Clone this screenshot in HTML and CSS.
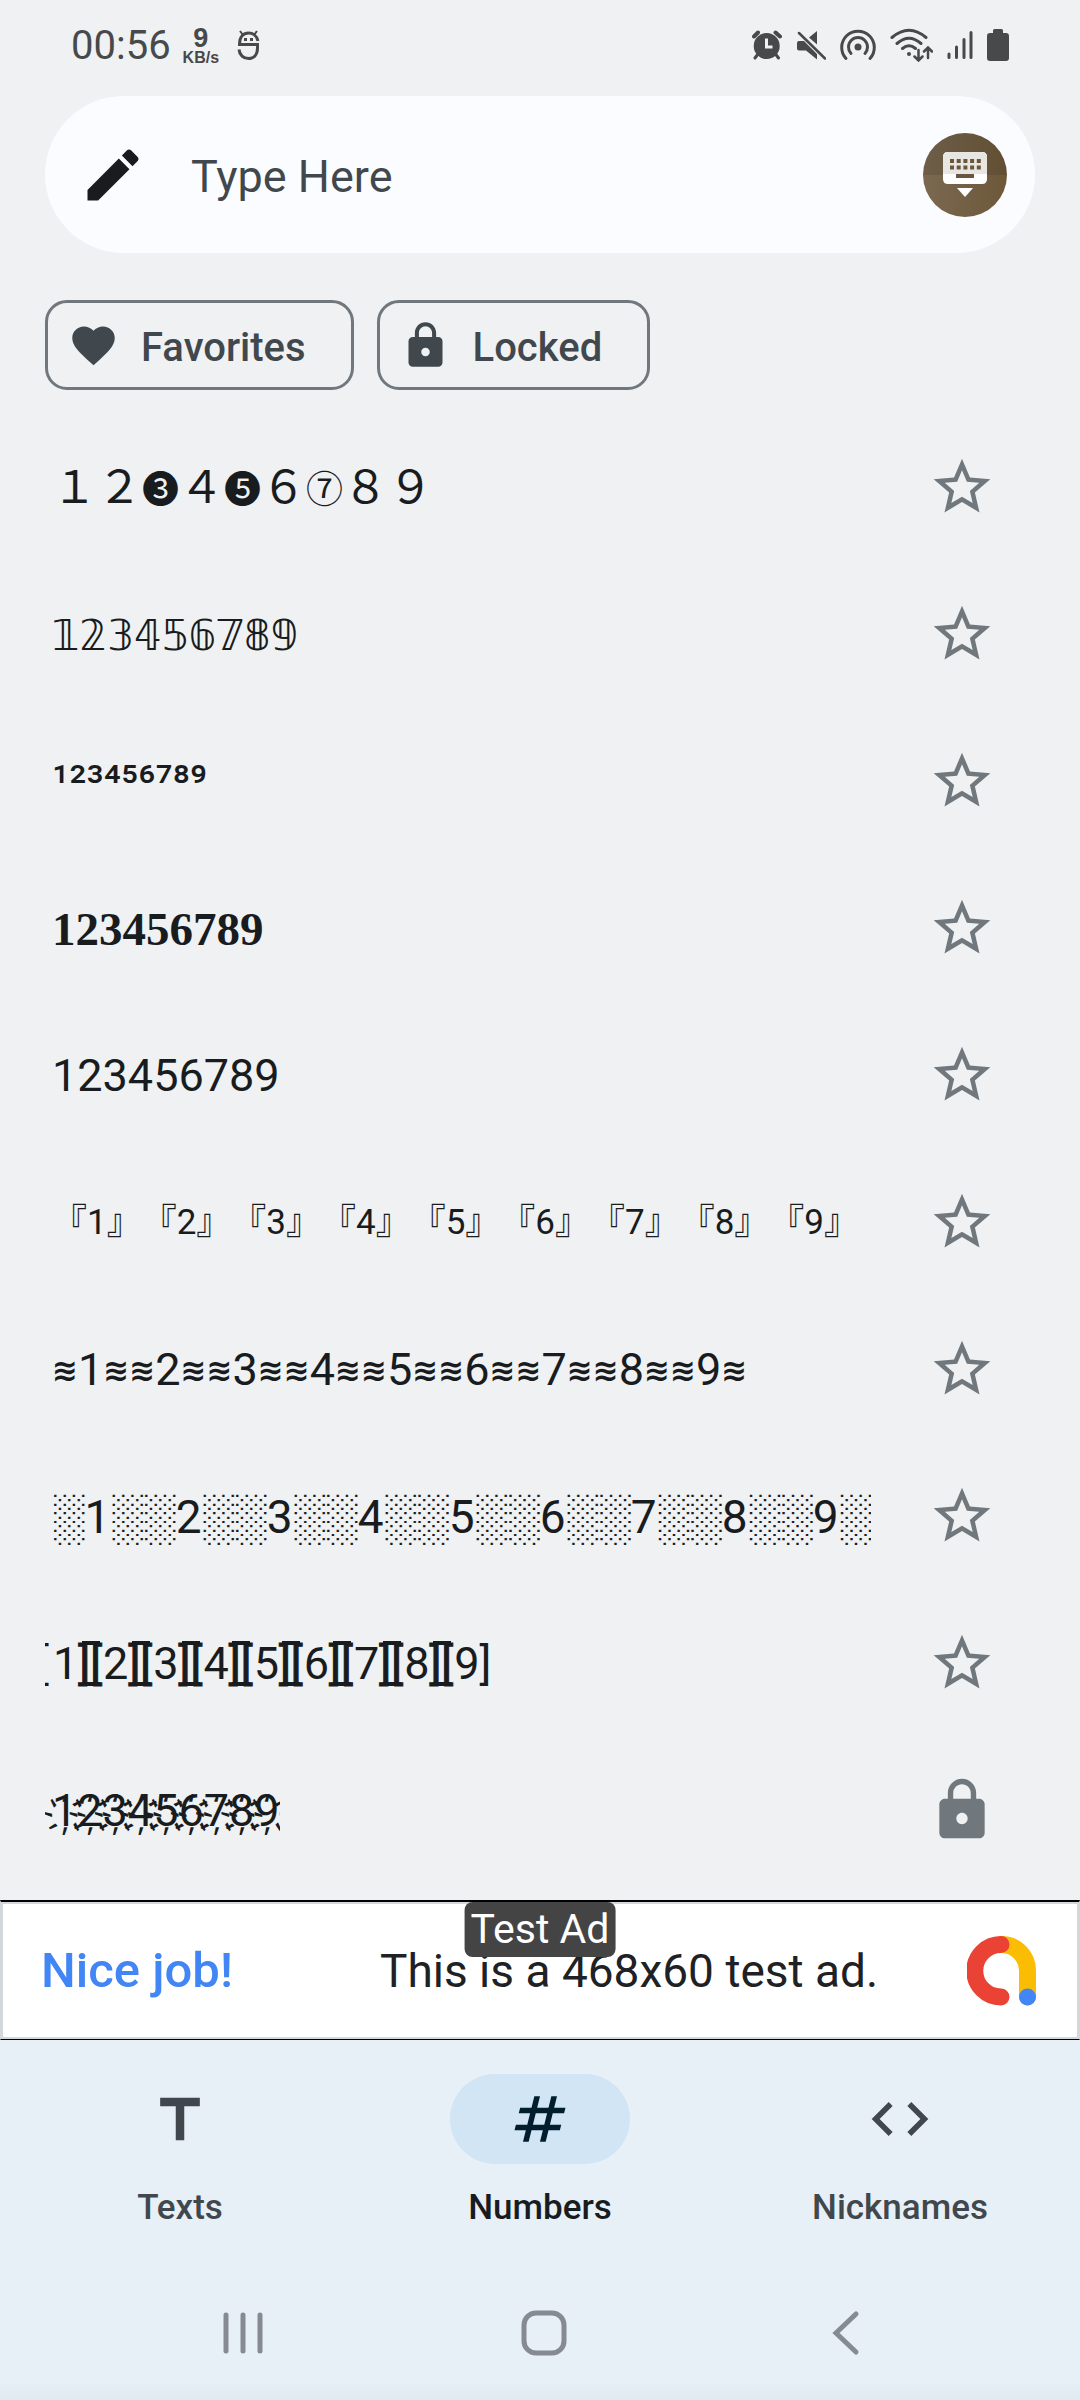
FILE: index.html
```
<!DOCTYPE html>
<html lang="en">
<head>
    <meta charset="UTF-8">
    <meta name="viewport" content="width=device-width, initial-scale=1">
    <title>Numbers</title>
    <link rel="stylesheet" href="styles.css">
</head>
<body>

<svg class="defs" aria-hidden="true">
    <symbol id="star" viewBox="0 0 24 24">
        <path d="M22 9.24l-7.19-.62L12 2 9.19 8.63 2 9.24l5.46 4.73L5.82 21 12 17.27 18.18 21l-1.63-7.03L22 9.24zM12 15.4l-3.76 2.27 1-4.28-3.32-2.88 4.38-.38L12 6.1l1.71 4.04 4.38.38-3.32 2.88 1 4.28L12 15.4z"/>
    </symbol>
    <symbol id="lock" viewBox="0 0 24 24">
        <path d="M18 8h-1V6c0-2.76-2.24-5-5-5S7 3.24 7 6v2H6c-1.1 0-2 .9-2 2v10c0 1.1.9 2 2 2h12c1.1 0 2-.9 2-2V10c0-1.1-.9-2-2-2zm-6 9c-1.1 0-2-.9-2-2s.9-2 2-2 2 .9 2 2-.9 2-2 2zm3.1-9H8.9V6c0-1.71 1.39-3.1 3.1-3.1s3.1 1.39 3.1 3.1v2z"/>
    </symbol>
</svg>

<header class="status">
    <time>00:56</time>
    <div class="speed"><b>9</b><small>KB/s</small></div>
    <svg class="app" viewBox="0 0 23 31" width="23" height="31" fill="none" stroke="#47494a" stroke-width="3">
        <path d="M21 11C20 6 16 3 11.500 3S2.500 6 2.500 14.500H20.500V18c0 7-4 10.500-9 10.500S2.500 25 2 19.500"/>
        <path d="M3 1l3 4M20 1l-3 4" stroke-width="2"/>
        <path d="M7 9.500h3M13 9.500h3"/>
    </svg>
    <div class="indicators">
        <svg viewBox="0 0 30 30" width="30" height="30">
            <circle cx="14.700" cy="16" r="13"/>
            <path d="M2 6.500L6 2.500M23.500 2.500L28 6.500" stroke="#47494a" stroke-width="4" stroke-linecap="round"/>
            <path d="M6 24l-3 4M23.500 24l3 4" stroke="#47494a" stroke-width="3" stroke-linecap="round"/>
            <path d="M14.500 8.500v8.500h6" fill="none" stroke="#eff1f3" stroke-width="3"/>
        </svg>
        <svg viewBox="0 0 30 30" width="30" height="30">
            <path d="M1 13q0-2 2-2h5L21 24v5.500L10 20.500H3q-2 0-2-2zM13 7.500L21 1v13.500z"/>
            <path d="M3 3L29 28.500" stroke="#47494a" stroke-width="2.500" stroke-linecap="round"/>
        </svg>
        <svg viewBox="0 0 36 34" width="36" height="34" fill="none" stroke="#47494a" stroke-width="3" stroke-linecap="round">
            <path d="M6 30.500A16.300 16.300 0 1 1 30 30.500M11 25.500A9.500 9.500 0 1 1 25 25.500"/>
            <circle cx="18" cy="19" r="3.500" fill="#47494a" stroke="none"/>
        </svg>
        <svg viewBox="0 0 43 34" width="43" height="34" fill="none" stroke="#47494a" stroke-width="3" stroke-linecap="round">
            <path d="M2 9.500Q19 -5 36 9.500M7 15.500Q19 5 31 15.500M12.500 20.500Q19 15 25.500 20.500"/>
            <circle cx="19" cy="26" r="2" fill="#47494a" stroke="none"/>
            <path d="M28.500 22v10M24.500 28.500l4 4 4-4M38 30V20M34 23.500l4-4 4 4" stroke-width="2.500"/>
        </svg>
        <svg viewBox="0 0 26 30" width="26" height="30" stroke="#47494a" stroke-width="3" stroke-linecap="round">
            <path d="M2 24v3.500M9.500 17v10.500M17 9.500v18M24 2.500v25"/>
        </svg>
        <svg viewBox="0 0 22 32" width="22" height="32">
            <path d="M6 1.500Q6 0 7.500 0h7Q16 0 16 1.500V4h3q3 0 3 3v22q0 3-3 3H3q-3 0-3-3V7q0-3 3-3h3z"/>
        </svg>
    </div>
</header>

<form class="search">
    <label for="text" aria-label="Type Here">
        <svg viewBox="0 0 24 24" width="68" height="68" fill="#191c1e">
            <path d="M3 17.250V21h3.750L17.810 9.940l-3.750-3.750L3 17.250zM20.710 7.040c.39-.39.39-1.020 0-1.410l-2.340-2.340c-.39-.39-1.020-.39-1.410 0l-1.830 1.830 3.750 3.750 1.830-1.830z"/>
        </svg>
    </label>
    <input id="text" type="text" placeholder="Type Here">
    <button type="button" class="keyboard" aria-label="Keyboard">
        <svg viewBox="0 0 44 46" width="44" height="46">
            <path d="M5 0h34q5 0 5 5v22q0 5-5 5H5q-5 0-5-5V5q0-5 5-5z" fill="#fff"/>
            <path d="M5 0h34q5 0 5 5v17H0V5q0-5 5-5z" fill="#e8e6e3"/>
            <path d="M7 9h31M7 15.500h31" stroke="#69563c" stroke-width="4" stroke-dasharray="4 2.700"/>
            <path d="M13 24h18" stroke="#69563c" stroke-width="4"/>
            <path d="M14 36h16l-8 9z" fill="#fff"/>
        </svg>
    </button>
</form>

<div class="chips">
    <button>
        <svg viewBox="0 0 24 24" width="51" height="51">
            <path d="M12 21.350l-1.450-1.320C5.400 15.360 2 12.280 2 8.500 2 5.420 4.420 3 7.500 3c1.740 0 3.410.81 4.500 2.090C13.090 3.810 14.760 3 16.500 3 19.580 3 22 5.420 22 8.500c0 3.780-3.400 6.860-8.550 11.540L12 21.350z"/>
        </svg>
        <span>Favorites</span>
    </button>
    <button>
        <svg width="51" height="51"><use href="#lock"/></svg>
        <span>Locked</span>
    </button>
</div>

<ul class="styles">
    <li>
        <span class="sample">１２<span class="circled">❸</span>４<span class="circled">❺</span>６<span class="circled">⑦</span>８９</span>
        <button aria-label="Add to favorites"><svg><use href="#star"/></svg></button>
    </li>
    <li>
        <span class="sample double">𝟙𝟚𝟛𝟜𝟝𝟞𝟟𝟠𝟡</span>
        <button aria-label="Add to favorites"><svg><use href="#star"/></svg></button>
    </li>
    <li>
        <span class="sample small">¹²³⁴⁵⁶⁷⁸⁹</span>
        <button aria-label="Add to favorites"><svg><use href="#star"/></svg></button>
    </li>
    <li>
        <span class="sample serif">123456789</span>
        <button aria-label="Add to favorites"><svg><use href="#star"/></svg></button>
    </li>
    <li>
        <span class="sample">123456789</span>
        <button aria-label="Add to favorites"><svg><use href="#star"/></svg></button>
    </li>
    <li>
        <span class="sample corner">『1』『2』『3』『4』『5』『6』『7』『8』『9』</span>
        <button aria-label="Add to favorites"><svg><use href="#star"/></svg></button>
    </li>
    <li>
        <span class="sample waves"><i>≋</i>1<i>≋≋</i>2<i>≋≋</i>3<i>≋≋</i>4<i>≋≋</i>5<i>≋≋</i>6<i>≋≋</i>7<i>≋≋</i>8<i>≋≋</i>9<i>≋</i></span>
        <button aria-label="Add to favorites"><svg><use href="#star"/></svg></button>
    </li>
    <li>
        <span class="sample shade">░1░░2░░3░░4░░5░░6░░7░░8░░9░</span>
        <button aria-label="Add to favorites"><svg><use href="#star"/></svg></button>
    </li>
    <li>
        <span class="sample brackets"><i>[</i>1<b>][</b>2<b>][</b>3<b>][</b>4<b>][</b>5<b>][</b>6<b>][</b>7<b>][</b>8<b>][</b>9]</span>
        <button aria-label="Add to favorites"><svg><use href="#star"/></svg></button>
    </li>
    <li>
        <span class="sample">1҉2҉3҉4҉5҉6҉7҉8҉9҉</span>
        <button aria-label="Unlock"><svg><use href="#lock"/></svg></button>
    </li>
</ul>

<aside class="ad">
    <span class="badge">Test Ad</span>
    <strong>Nice job!</strong>
    <p>This is a 468x60 test ad.</p>
    <svg viewBox="0 0 70 70" width="70" height="70" fill="none" stroke-width="17" stroke-linecap="round">
        <path d="M34.500 8.500A26 26 0 0 1 60.500 34.500V61" stroke="#fbbc04"/>
        <path d="M34 8.500A26 26 0 0 0 34 61" stroke="#ea4335"/>
        <circle cx="60.500" cy="61" r="8.500" fill="#4285f4"/>
    </svg>
</aside>

<nav class="tabs">
    <a href="#texts">
        <span class="pill"><svg viewBox="0 0 24 24" width="68" height="68"><path d="M5 4.500v3h5.500v12h3v-12H19v-3z"/></svg></span>
        Texts
    </a>
    <a href="#numbers" class="active">
        <span class="pill"><svg viewBox="0 0 24 24" width="68" height="68"><path d="M20.500 10l.5-2h-4l1-4h-2l-1 4h-4l1-4h-2L9 8H5l-.5 2h4l-1 4h-4L3 16h4l-1 4h2l1-4h4l-1 4h2l1-4h4l.5-2h-4l1-4h4zm-7 4h-4l1-4h4l-1 4z"/></svg></span>
        Numbers
    </a>
    <a href="#nicknames">
        <span class="pill"><svg viewBox="0 0 24 24" width="68" height="68"><path d="M9.400 16.600L4.800 12l4.600-4.600L8 6l-6 6 6 6 1.400-1.400zm5.200 0l4.600-4.600-4.600-4.600L16 6l6 6-6 6-1.400-1.400z"/></svg></span>
        Nicknames
    </a>
</nav>

<footer class="system">
    <button aria-label="Recent apps"><svg viewBox="0 0 46 46" width="46" height="46"><path d="M6 5v36M23 5v36M40 5v36"/></svg></button>
    <button aria-label="Home"><svg viewBox="0 0 46 46" width="46" height="46"><rect x="3" y="3" width="40" height="40" rx="12"/></svg></button>
    <button aria-label="Back"><svg viewBox="0 0 46 46" width="46" height="46"><path d="M34 4L14 23l20 19"/></svg></button>
</footer>

</body>
</html>
```
FILE: styles.css
```
* {
    box-sizing: border-box;
}

body {
    display: flex;
    flex-direction: column;
    min-height: 100vh;
    margin: 0;
    background-color: #eff1f3;
    color: #191c1e;
    font-family: Roboto, "Noto Sans CJK JP", sans-serif;
    font-size: 45px;
}

button {
    padding: 0;
    border: 0;
    background: none;
    font: inherit;
    cursor: pointer;
}

svg {
    display: block;
    flex: none;
}

.defs {
    position: absolute;
    width: 0;
    height: 0;
}

/* status bar */

.status {
    display: flex;
    align-items: center;
    height: 96px;
    padding: 0 71px 6px;
    color: #47494a;
}

.status time {
    font-size: 40px;
}

.speed {
    display: flex;
    flex-direction: column;
    align-items: center;
    margin: 0 18px 0 12px;
    font-family: "Liberation Sans", sans-serif;
    font-weight: bold;
}

.speed b {
    font-size: 27px;
    line-height: 24px;
}

.speed small {
    font-size: 16px;
    line-height: 15px;
}

.indicators {
    display: flex;
    align-items: center;
    gap: 14px;
    margin-left: auto;
    fill: #47494a;
}

/* search */

.search {
    display: flex;
    align-items: center;
    height: 157px;
    margin: 0 45px;
    padding: 0 28px 0 34px;
    border-radius: 79px;
    background-color: #fbfcff;
}

.search input {
    flex: 1;
    min-width: 0;
    margin-left: 44px;
    padding: 4px 0 0;
    border: 0;
    outline: 0;
    background: none;
    color: #191c1e;
    font: inherit;
}

.search input::placeholder {
    color: #41484d;
    opacity: 1;
}

.keyboard {
    display: flex;
    align-items: center;
    justify-content: center;
    width: 84px;
    height: 84px;
    border-radius: 50%;
    background: linear-gradient(rgba(0, 0, 0, .1) 50%, transparent 50%), linear-gradient(90deg, #7a6850, #6d5839);
}

/* filter chips */

.chips {
    display: flex;
    gap: 23px;
    padding: 47px 45px 23px;
}

.chips button {
    display: flex;
    align-items: center;
    gap: 22px;
    height: 90px;
    padding: 0 45px 0 20px;
    border: 3px solid #71787d;
    border-radius: 22px;
    color: #41484d;
    fill: #41484d;
    font-size: 40px;
    font-weight: 500;
}

.chips span {
    padding-top: 4px;
}

/* list of number styles */

.styles {
    flex: 1;
    margin: 0;
    padding: 0 84px 17px 45px;
    list-style: none;
}

.styles li {
    display: flex;
    align-items: center;
    justify-content: space-between;
    height: 147px;
}

.styles svg {
    width: 68px;
    height: 68px;
    fill: #71787d;
}

.sample {
    padding: 2px 0 0 7px;
    overflow: hidden;
    line-height: 80px;
    white-space: nowrap;
    text-spacing-trim: space-all;
}

.circled {
    font-family: "Noto Sans CJK JP", sans-serif;
    font-size: 37px;
}

.double {
    font-family: "DejaVu Sans", sans-serif;
    font-size: 43px;
}

.small {
    font-size: 47px;
}

.serif {
    font-family: "Liberation Serif", serif;
    font-size: 47px;
    font-weight: bold;
}

.corner {
    font-size: 35px;
}

.waves i {
    font-family: "DejaVu Sans", sans-serif;
    font-size: 31px;
    font-style: normal;
    font-weight: bold;
    line-height: 1;
    vertical-align: 4px;
}

.shade {
    font-family: Roboto, "Liberation Sans", sans-serif;
    font-size: 46px;
}

.brackets i {
    margin: 0 4px 0 -15px;
    font-style: normal;
}

/* top and bottom rules join each pair of brackets */
.brackets b {
    padding-right: 1px;
    background:
        linear-gradient(#191c1e, #191c1e) center 4px / 18px 4px no-repeat,
        linear-gradient(#191c1e, #191c1e) center bottom 4px / 18px 4px no-repeat;
    font-weight: normal;
    -webkit-text-stroke: 1px #191c1e;
}

/* ad banner */

.ad {
    position: relative;
    display: flex;
    align-items: center;
    height: 140px;
    padding: 0 42px 0 40px;
    border: 1px solid #d3d8dd;
    border-top: 2px solid #000;
    border-bottom: 1px solid #000;
    background-color: #fff;
    box-shadow: inset 0 0 0 2px #d3d8dd;
    color: #202124;
}

.ad strong {
    flex: 0 0 339px;
    color: #4285f4;
    font-size: 49px;
    font-weight: 500;
}

.ad p {
    flex: 1;
    margin: 0;
    font-size: 46px;
}

.badge {
    position: absolute;
    top: 0;
    left: 50%;
    transform: translateX(-50%);
    padding: 0 6px;
    border-radius: 8px;
    background-color: #444;
    color: #fff;
    font-size: 41px;
    line-height: 55px;
    white-space: nowrap;
}

/* bottom tabs */

.tabs {
    display: grid;
    grid-template-columns: repeat(3, 1fr);
    padding: 34px 0 35px;
    background-color: #e7eff7;
}

.tabs a {
    display: flex;
    flex-direction: column;
    align-items: center;
    gap: 21px;
    color: #41484d;
    fill: #41484d;
    font-size: 35px;
    font-weight: 500;
    line-height: 45px;
    text-decoration: none;
}

.pill {
    display: flex;
    align-items: center;
    justify-content: center;
    width: 180px;
    height: 90px;
    border-radius: 45px;
}

.tabs .active {
    color: #191c1e;
    fill: #001e2e;
}

.active .pill {
    background-color: #d1e5f4;
}

/* system navigation */

.system {
    display: grid;
    grid-template-columns: repeat(3, 1fr);
    height: 136px;
    padding: 0 84px 0 92px;
    background: linear-gradient(#e7eff7 85%, #e0e8f0);
}

.system button {
    display: flex;
    align-items: center;
    justify-content: center;
}

.system svg {
    fill: none;
    stroke: #858b91;
    stroke-width: 5px;
    stroke-linecap: round;
}
```
